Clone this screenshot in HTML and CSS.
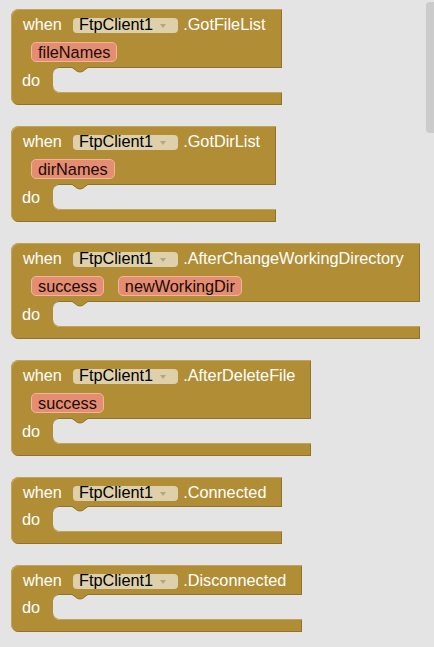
FILE: index.html
```html
<!DOCTYPE html>
<html>
<head>
<meta charset="utf-8">
<link rel="stylesheet" href="styles.css">
</head>
<body>
<div class="workspace">
  <div class="block">
    <div class="head"><span class="lbl">when</span><span class="field">FtpClient1<span class="arrow"></span></span><span class="lbl">.GotFileList</span></div>
    <div class="params"><span class="param">fileNames</span></div>
    <div class="body"><span class="lbl do">do</span><div class="mouth"><svg class="notch" width="18" height="6" viewBox="0 0 18 6"><path d="M0.5 0 L6.5 4.5 Q9 5.5 11.5 4.5 L17.5 0 Z" fill="#b18e35"/><path d="M0.5 0 L6.5 4.5 Q9 5.5 11.5 4.5 L17.5 0" fill="none" stroke="#8f722b" stroke-width="1"/></svg></div></div>
    <div class="foot"></div>
  </div>
  <div class="block">
    <div class="head"><span class="lbl">when</span><span class="field">FtpClient1<span class="arrow"></span></span><span class="lbl">.GotDirList</span></div>
    <div class="params"><span class="param">dirNames</span></div>
    <div class="body"><span class="lbl do">do</span><div class="mouth"><svg class="notch" width="18" height="6" viewBox="0 0 18 6"><path d="M0.5 0 L6.5 4.5 Q9 5.5 11.5 4.5 L17.5 0 Z" fill="#b18e35"/><path d="M0.5 0 L6.5 4.5 Q9 5.5 11.5 4.5 L17.5 0" fill="none" stroke="#8f722b" stroke-width="1"/></svg></div></div>
    <div class="foot"></div>
  </div>
  <div class="block">
    <div class="head"><span class="lbl">when</span><span class="field">FtpClient1<span class="arrow"></span></span><span class="lbl">.AfterChangeWorkingDirectory</span></div>
    <div class="params"><span class="param">success</span><span class="param">newWorkingDir</span></div>
    <div class="body"><span class="lbl do">do</span><div class="mouth"><svg class="notch" width="18" height="6" viewBox="0 0 18 6"><path d="M0.5 0 L6.5 4.5 Q9 5.5 11.5 4.5 L17.5 0 Z" fill="#b18e35"/><path d="M0.5 0 L6.5 4.5 Q9 5.5 11.5 4.5 L17.5 0" fill="none" stroke="#8f722b" stroke-width="1"/></svg></div></div>
    <div class="foot"></div>
  </div>
  <div class="block">
    <div class="head"><span class="lbl">when</span><span class="field">FtpClient1<span class="arrow"></span></span><span class="lbl">.AfterDeleteFile</span></div>
    <div class="params"><span class="param">success</span></div>
    <div class="body"><span class="lbl do">do</span><div class="mouth"><svg class="notch" width="18" height="6" viewBox="0 0 18 6"><path d="M0.5 0 L6.5 4.5 Q9 5.5 11.5 4.5 L17.5 0 Z" fill="#b18e35"/><path d="M0.5 0 L6.5 4.5 Q9 5.5 11.5 4.5 L17.5 0" fill="none" stroke="#8f722b" stroke-width="1"/></svg></div></div>
    <div class="foot"></div>
  </div>
  <div class="block">
    <div class="head"><span class="lbl">when</span><span class="field">FtpClient1<span class="arrow"></span></span><span class="lbl">.Connected</span></div>
    <div class="body"><span class="lbl do">do</span><div class="mouth"><svg class="notch" width="18" height="6" viewBox="0 0 18 6"><path d="M0.5 0 L6.5 4.5 Q9 5.5 11.5 4.5 L17.5 0 Z" fill="#b18e35"/><path d="M0.5 0 L6.5 4.5 Q9 5.5 11.5 4.5 L17.5 0" fill="none" stroke="#8f722b" stroke-width="1"/></svg></div></div>
    <div class="foot"></div>
  </div>
  <div class="block">
    <div class="head"><span class="lbl">when</span><span class="field">FtpClient1<span class="arrow"></span></span><span class="lbl">.Disconnected</span></div>
    <div class="body"><span class="lbl do">do</span><div class="mouth"><svg class="notch" width="18" height="6" viewBox="0 0 18 6"><path d="M0.5 0 L6.5 4.5 Q9 5.5 11.5 4.5 L17.5 0 Z" fill="#b18e35"/><path d="M0.5 0 L6.5 4.5 Q9 5.5 11.5 4.5 L17.5 0" fill="none" stroke="#8f722b" stroke-width="1"/></svg></div></div>
    <div class="foot"></div>
  </div>
</div>
<div class="scrollbar"></div>
</body>
</html>
```

FILE: styles.css
```css
html, body {
  margin: 0;
  padding: 0;
}
body {
  width: 434px;
  height: 647px;
  background: #e4e4e4;
  overflow: hidden;
  position: relative;
  font-family: "Liberation Sans", Arial, sans-serif;
  font-size: 16.3px;
}
.workspace {
  display: flex;
  flex-direction: column;
  align-items: flex-start;
  gap: 21px;
  padding: 9px 0 0 11px;
}
.block {
  display: flex;
  flex-direction: column;
  background: #b18e35;
  border-radius: 8px 0 0 8px;
  box-shadow: inset 1px 1px 0 #c2a35a, inset -1px -1px 0 #8f722b;
  padding-top: 9px;
}
.head {
  display: flex;
  align-items: center;
  height: 15px;
  padding: 0 16px 0 12px;
  white-space: nowrap;
}
.lbl {
  color: #fff;
}
.head .lbl {
  padding-bottom: 2px;
}
.field {
  display: flex;
  align-items: center;
  box-sizing: border-box;
  height: 15px;
  margin: 0 5px 0 11px;
  padding: 0 12px 2px 6px;
  background: #ddd0ab;
  border-radius: 4px;
  color: #000;
}
.arrow {
  width: 0;
  height: 0;
  border-left: 3px solid transparent;
  border-right: 3px solid transparent;
  border-top: 4px solid #b5a67c;
  margin: 2px 0 0 7px;
}
.params {
  display: flex;
  gap: 14px;
  padding-left: 20px;
  margin-top: 9px;
}
.param {
  height: 20px;
  line-height: 18px;
  padding: 0 6px;
  background: #e48d72;
  border: 1px solid #f0b69c;
  border-radius: 5px;
  box-sizing: border-box;
  color: #1a0a05;
}
.body {
  display: flex;
  align-items: center;
  margin-top: 5px;
}
.do {
  width: 42px;
  padding-left: 11px;
  box-sizing: border-box;
}
.mouth {
  flex: 1;
  height: 26px;
  position: relative;
  background: #e4e4e4;
  border-radius: 6px 0 0 7px;
  box-shadow: inset 0 1px 0 #8f722b, inset 0 -1px 0 #c2a35a;
}
.notch {
  display: block;
  position: absolute;
  left: 18px;
  top: 0;
}
.foot {
  height: 12px;
}
.scrollbar {
  position: absolute;
  top: 2px;
  right: 0;
  width: 8px;
  height: 131px;
  background: #cbcbcb;
  border-radius: 4px 0 0 4px;
}
```
